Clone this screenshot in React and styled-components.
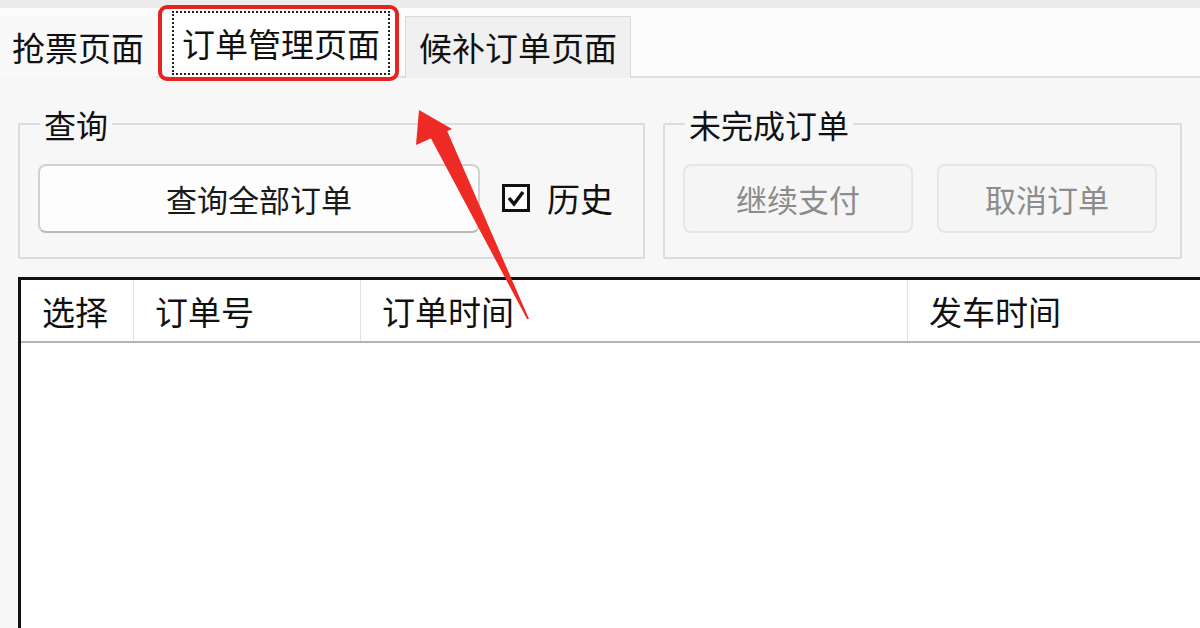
import React from 'react';
import styled, { createGlobalStyle } from 'styled-components';

const Global = createGlobalStyle`
    html, body {
        margin: 0;
        padding: 0;
        background: #f7f7f7;
    }
    * {
        box-sizing: border-box;
    }
`

const Page = styled.div`
    position: relative;
    width: 1200px;
    height: 628px;
    overflow: hidden;
    background: #f7f7f7;
    font-family: "Noto Sans CJK SC", "Microsoft YaHei", sans-serif;
    color: #111;
`

const TopStrip = styled.div`
    height: 8px;
    background: #ececec;
`

const TabBar = styled.div`
    display: flex;
    align-items: flex-end;
    height: 70px;
    background: #fcfcfc;
    border-bottom: 2px solid #dedede;
`

const Tab = styled.div`
    display: flex;
    align-items: center;
    height: ${p => p.$active ? '70px' : '62px'};
    margin-right: ${p => p.$gap || 0}px;
    margin-bottom: -2px;
    padding: 0 ${p => p.$pad || 12}px;
    font-size: 33px;
    line-height: 1;
    background: ${p => p.$active ? '#ffffff' : p.$plain ? '#f9f9f9' : '#f0f0f0'};
    border: ${p => p.$plain || p.$active ? 'none' : '1px solid #dadada'};
    border-bottom: none;
`

const FocusText = styled.span`
    display: flex;
    align-items: center;
    height: 60px;
    padding: 0 8px;
    outline: 2px dotted #222;
    outline-offset: 0;
`

const Highlight = styled.div`
    position: absolute;
    left: 158px;
    top: 5px;
    width: 241px;
    height: 76px;
    border: 4px solid #e6231e;
    border-radius: 9px;
    pointer-events: none;
`

const Content = styled.div`
    padding: 31px 0 0 18px;
`

const GroupRow = styled.div`
    display: flex;
    gap: 18px;
`

const Group = styled.fieldset`
    margin: 0;
    width: ${p => p.$width}px;
    height: 150px;
    padding: 12px 18px 12px 18px;
    border: 2px solid #dcdcdc;
    border-radius: 2px;
    display: flex;
    align-items: center;
    gap: ${p => p.$gap || 0}px;
`

const Legend = styled.legend`
    padding: 0 4px;
    margin-left: 2px;
    font-size: 32px;
    line-height: 30px;
`

const Button = styled.div`
    display: flex;
    align-items: center;
    justify-content: center;
    width: ${p => p.$width}px;
    height: 69px;
    font-size: 31px;
    border-radius: 8px;
    color: ${p => p.$disabled ? '#8c8c8c' : '#1a1a1a'};
    background: ${p => p.$disabled ? '#f5f5f5' : '#fdfdfd'};
    border: 2px solid ${p => p.$disabled ? '#e6e6e6' : '#d2d2d2'};
    border-bottom-color: ${p => p.$disabled ? '#e6e6e6' : '#b9b9b9'};
`

const Check = styled.label`
    display: flex;
    align-items: center;
    gap: 17px;
    margin-left: 22px;
    font-size: 33px;
`

const Box = styled.svg`
    width: 28px;
    height: 28px;
    display: block;
`

const Table = styled.div`
    margin-top: 18px;
    width: 1200px;
    height: 360px;
    background: #ffffff;
    border-top: 3px solid #111;
    border-left: 3px solid #111;
`

const HeaderRow = styled.div`
    display: flex;
    height: 63px;
    border-bottom: 2px solid #b4b4b4;
`

const HeaderCell = styled.div`
    display: flex;
    align-items: center;
    width: ${p => p.$width}px;
    flex: ${p => p.$width ? 'none' : 1};
    padding-left: 21px;
    font-size: 33px;
    border-right: 1px solid #e2e2e2;
`

const Overlay = styled.svg`
    position: absolute;
    left: 0;
    top: 0;
    pointer-events: none;
`

const App = () => {
    return (
        <Page>
            <Global />
            <TopStrip />
            <TabBar>
                <Tab $plain $gap={13}>抢票页面</Tab>
                <Tab $active $pad={5} $gap={12}>
                    <FocusText>订单管理页面</FocusText>
                </Tab>
                <Tab $pad={13}>候补订单页面</Tab>
            </TabBar>
            <Content>
                <GroupRow>
                    <Group $width={627}>
                        <Legend>查询</Legend>
                        <Button $width={442}>查询全部订单</Button>
                        <Check>
                            <Box viewBox="0 0 28 28">
                                <rect x="1.5" y="1.5" width="25" height="25" fill="#fff" stroke="#111" strokeWidth="3" />
                                <path d="M7 14 L12 20 L21 8" fill="none" stroke="#111" strokeWidth="3.5" />
                            </Box>
                            历史
                        </Check>
                    </Group>
                    <Group $width={519} $gap={24}>
                        <Legend>未完成订单</Legend>
                        <Button $width={230} $disabled>继续支付</Button>
                        <Button $width={220} $disabled>取消订单</Button>
                    </Group>
                </GroupRow>
                <Table>
                    <HeaderRow>
                        <HeaderCell $width={113}>选择</HeaderCell>
                        <HeaderCell $width={227}>订单号</HeaderCell>
                        <HeaderCell $width={547}>订单时间</HeaderCell>
                        <HeaderCell>发车时间</HeaderCell>
                    </HeaderRow>
                </Table>
            </Content>
            <Highlight />
            {/* red annotation arrow */}
            <Overlay width="1200" height="628" viewBox="0 0 1200 628">
                <polygon points="427,131 445,126 529,319 527,319" fill="#ee2a24" />
                <polygon points="419,110 452,129 416,145" fill="#ee2a24" />
            </Overlay>
        </Page>
    )
}

export default App;
